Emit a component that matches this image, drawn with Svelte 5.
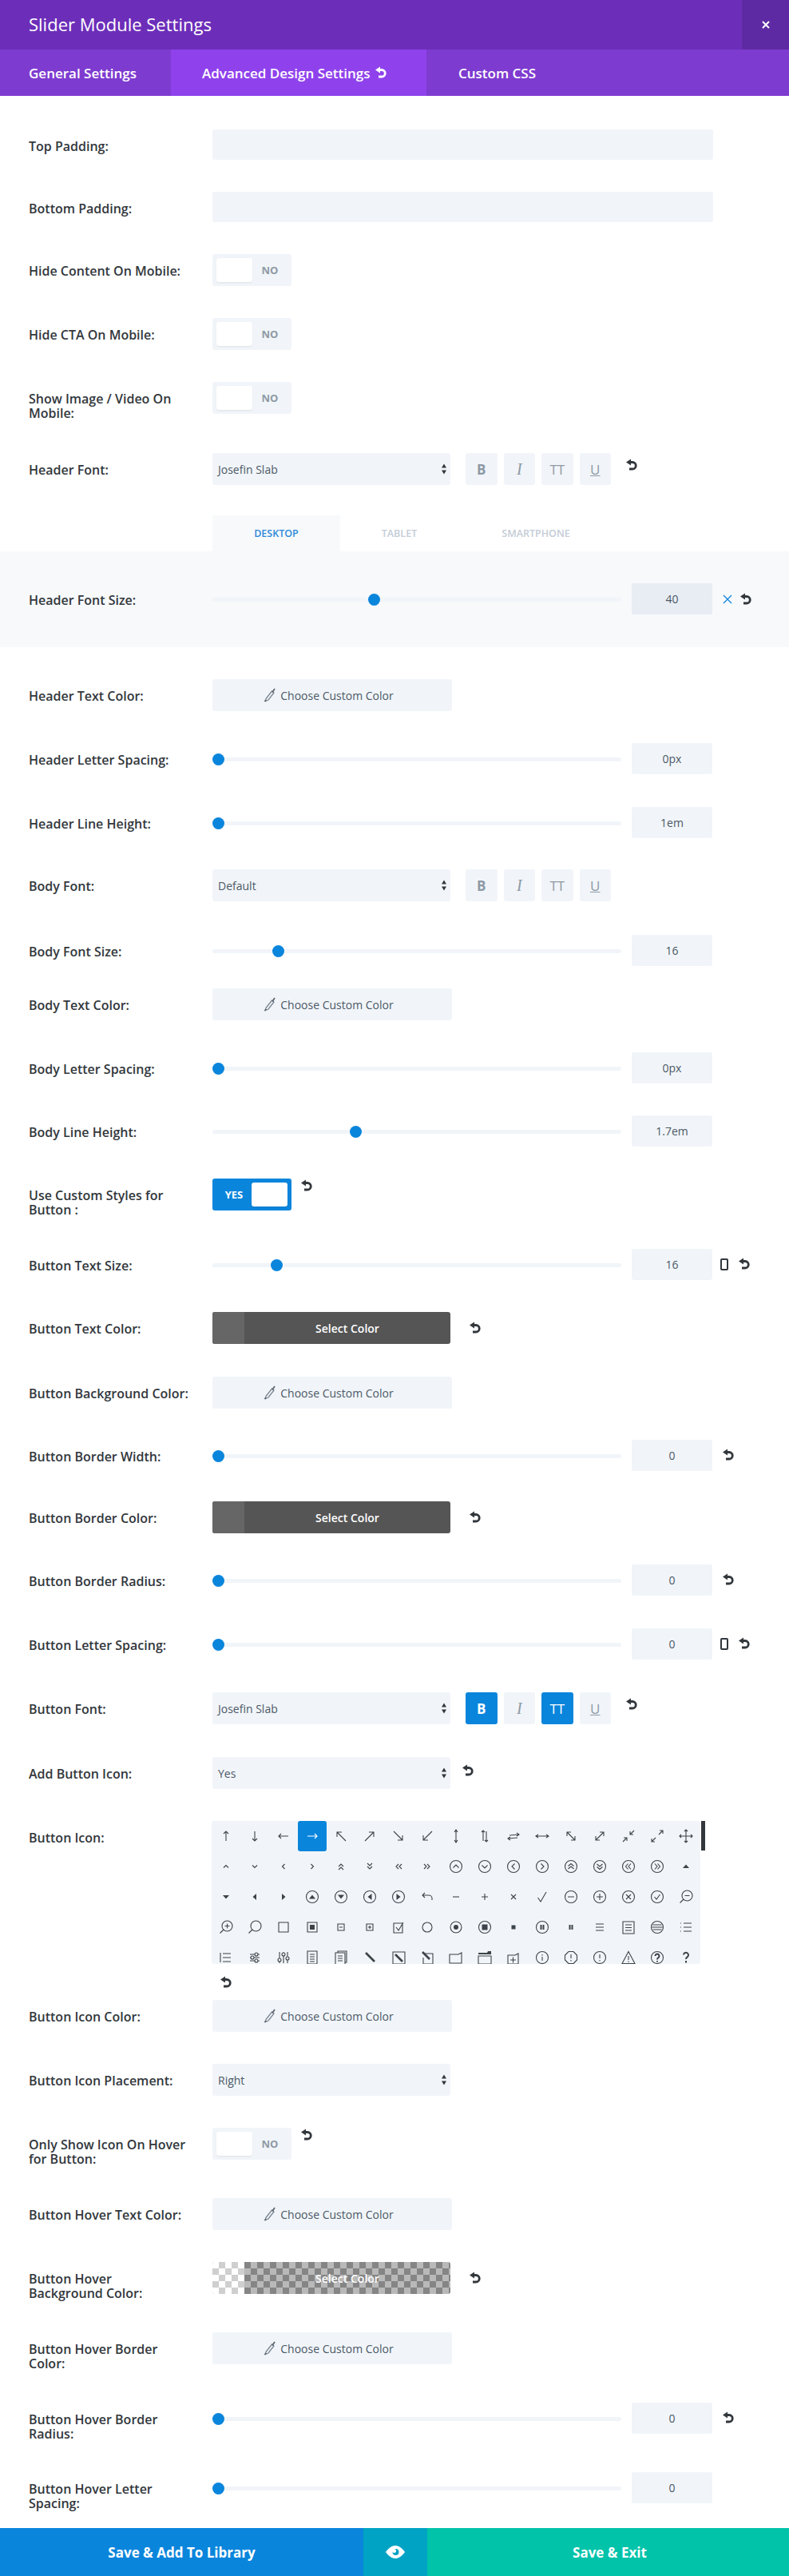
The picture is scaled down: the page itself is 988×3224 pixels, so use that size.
<script>
	// rows: gap = space above the 40px control
	const rows = [
		{ gap: 38, label: 'Bottom Padding:', type: 'text' },
		{ gap: 38, label: 'Hide Content On Mobile:', type: 'toggle' },
		{ gap: 40, label: 'Hide CTA On Mobile:', type: 'toggle' },
		{ gap: 40, label: 'Show Image / Video On Mobile:', type: 'toggle' },
		{ gap: 49, label: 'Header Font:', type: 'font', value: 'Josefin Slab', reset: true }
	];
	const rows2 = [
		{ gap: 40, label: 'Header Text Color:', type: 'color' },
		{ gap: 40, label: 'Header Letter Spacing:', type: 'slider', pos: 0, value: '0px' },
		{ gap: 40, label: 'Header Line Height:', type: 'slider', pos: 0, value: '1em' },
		{ gap: 38, label: 'Body Font:', type: 'font', value: 'Default' },
		{ gap: 42, label: 'Body Font Size:', type: 'slider', pos: 75, value: '16' },
		{ gap: 27, label: 'Body Text Color:', type: 'color' },
		{ gap: 40, label: 'Body Letter Spacing:', type: 'slider', pos: 0, value: '0px' },
		{ gap: 39, label: 'Body Line Height:', type: 'slider', pos: 172, value: '1.7em' },
		{ gap: 39, label: 'Use Custom Styles for Button :', type: 'toggle', on: true, reset: true },
		{ gap: 48, label: 'Button Text Size:', type: 'slider', pos: 73, value: '16', phone: true, reset: true },
		{ gap: 39, label: 'Button Text Color:', type: 'select-color', reset: true },
		{ gap: 41, label: 'Button Background Color:', type: 'color' },
		{ gap: 39, label: 'Button Border Width:', type: 'slider', pos: 0, value: '0', reset: true },
		{ gap: 37, label: 'Button Border Color:', type: 'select-color', reset: true },
		{ gap: 39, label: 'Button Border Radius:', type: 'slider', pos: 0, value: '0', reset: true },
		{ gap: 40, label: 'Button Letter Spacing:', type: 'slider', pos: 0, value: '0', phone: true, reset: true },
		{ gap: 40, label: 'Button Font:', type: 'font', value: 'Josefin Slab', active: ['B', 'TT'], reset: true },
		{ gap: 41, label: 'Add Button Icon:', type: 'select', value: 'Yes', reset: true }
	];
	const rows3 = [
		{ gap: 14, label: 'Button Icon Color:', type: 'color' },
		{ gap: 40, label: 'Button Icon Placement:', type: 'select', value: 'Right' },
		{ gap: 40, label: 'Only Show Icon On Hover for Button:', type: 'toggle', reset: true },
		{ gap: 48, label: 'Button Hover Text Color:', type: 'color' },
		{ gap: 40, label: 'Button Hover Background Color:', type: 'select-color', clear: true, reset: true },
		{ gap: 48, label: 'Button Hover Border Color:', type: 'color' },
		{ gap: 48, label: 'Button Hover Border Radius:', type: 'slider', pos: 0, value: '0', reset: true },
		{ gap: 47, label: 'Button Hover Letter Spacing:', type: 'slider', pos: 0, value: '0' }
	];

	const C = 'M19.5 12a7.5 7.5 0 1 1-15 0 7.5 7.5 0 1 1 15 0';
	const ring = (x, y, r) => `M${x + r} ${y}a${r} ${r} 0 1 1-${r * 2} 0 ${r} ${r} 0 1 1 ${r * 2} 0`;
	const SQ = 'M9.5 9.5h5v5h-5z';
	// s = thin stroke, f = filled, t = thick stroke
	const icons = [
		{ s: 'M12 18V6M9 9l3-3 3 3' },
		{ s: 'M12 6v12M9 15l3 3 3-3' },
		{ s: 'M18 12H6M9 9l-3 3 3 3' },
		{ s: 'M6 12h12M15 9l3 3-3 3' },
		{ s: 'M18 18L7 7M7 13V7h6' },
		{ s: 'M6 18L17 7M11 7h6v6' },
		{ s: 'M6 6l11 11M17 11v6h-6' },
		{ s: 'M18 6L7 17M13 17H7v-6' },
		{ s: 'M12 4v16M10 7l2-3 2 3M10 17l2 3 2-3' },
		{ s: 'M10 18V5M8 7l2-2 2 2M14 6v13M12 17l2 2 2-2' },
		{ s: 'M7 11l11-1M16 8l3 2-3 2M17 14L6 15M8 13l-3 2 3 2' },
		{ s: 'M4 12h16M7 10l-3 2 3 2M17 10l3 2-3 2' },
		{ s: 'M7 7l10 10M7 12V7h5M17 12v5h-5' },
		{ s: 'M17 7L7 17M12 7h5v5M7 12v5h5' },
		{ s: 'M19 5l-5 5M14 6v4h4M5 19l5-5M6 14h4v4' },
		{ s: 'M14 10l5-5M15 5h4v4M10 14l-5 5M5 15v4h4' },
		{ s: 'M12 4v16M4 12h16M10 6l2-2 2 2M10 18l2 2 2-2M6 10l-2 2 2 2M18 10l2 2-2 2' },

		{ s: 'M9 13.5l3-3 3 3' },
		{ s: 'M9 10.5l3 3 3-3' },
		{ s: 'M13.5 9l-3 3 3 3' },
		{ s: 'M10.5 9l3 3-3 3' },
		{ s: 'M9 12l3-3 3 3M9 16l3-3 3 3' },
		{ s: 'M9 8l3 3 3-3M9 12l3 3 3-3' },
		{ s: 'M12 9l-3 3 3 3M16 9l-3 3 3 3' },
		{ s: 'M8 9l3 3-3 3M12 9l3 3-3 3' },
		{ s: C + 'M8.5 13.5l3.5-3.5 3.5 3.5' },
		{ s: C + 'M8.5 10.5l3.5 3.5 3.5-3.5' },
		{ s: C + 'M13.5 8.5L10 12l3.5 3.5' },
		{ s: C + 'M10.5 8.5L14 12l-3.5 3.5' },
		{ s: C + 'M8.5 11.5l3.5-3 3.5 3M8.5 15l3.5-3 3.5 3' },
		{ s: C + 'M8.5 9l3.5 3 3.5-3M8.5 12.5l3.5 3 3.5-3' },
		{ s: C + 'M11.5 8.5l-3 3.5 3 3.5M15 8.5L12 12l3 3.5' },
		{ s: C + 'M9 8.5l3 3.5-3 3.5M12.5 8.5l3 3.5-3 3.5' },
		{ f: 'M8 14l4-4.5 4 4.5z' },

		{ f: 'M8 10l4 4.5 4-4.5z' },
		{ f: 'M14 8l-4.5 4 4.5 4z' },
		{ f: 'M10 8l4.5 4-4.5 4z' },
		{ s: C, f: 'M8 14.5l4-5 4 5z' },
		{ s: C, f: 'M8 9.5l4 5 4-5z' },
		{ s: C, f: 'M14.5 8l-5 4 5 4z' },
		{ s: C, f: 'M9.5 8l5 4-5 4z' },
		{ s: 'M6 10h8a4 4 0 0 1 4 4v2M9 7l-3 3 3 3' },
		{ s: 'M8 12h8' },
		{ s: 'M8 12h8M12 8v8' },
		{ s: 'M9 9l6 6M15 9l-6 6' },
		{ s: 'M6.5 13l3.5 5L17 6' },
		{ s: C + 'M8 12h8' },
		{ s: C + 'M8 12h8M12 8v8' },
		{ s: C + 'M9 9l6 6M15 9l-6 6' },
		{ s: C + 'M8.5 12l2.5 3 4.5-6' },
		{ s: ring(13.5, 10.5, 6.5) + 'M9 15l-4.5 4.5M10.5 10.5h6' },

		{ s: ring(13.5, 10.5, 6.5) + 'M9 15l-4.5 4.5M10.5 10.5h6M13.5 7.5v6' },
		{ s: ring(13.5, 10.5, 6.5) + 'M9 15l-4.5 4.5' },
		{ s: 'M6 6h12v12H6z' },
		{ s: 'M6 6h12v12H6z', f: 'M9 9h6v6H9z' },
		{ s: 'M8 8h8v8H8zM10 12h4' },
		{ s: 'M8 8h8v8H8zM10 12h4M12 10v4' },
		{ s: 'M6 7h11v12H6zM9 12l3 4 6-10' },
		{ s: ring(12, 12, 6) },
		{ s: ring(12, 12, 7), f: ring(12, 12, 3) },
		{ s: C, f: 'M8.5 8.5h7v7h-7z' },
		{ f: SQ },
		{ s: C, f: 'M9.5 9h2v6h-2zM12.5 9h2v6h-2z' },
		{ f: 'M9.5 9h2v6h-2zM12.5 9h2v6h-2z' },
		{ s: 'M7 8h10M7 12h10M7 16h10' },
		{ s: 'M5 5h14v15H5zM8 9h8M8 12.5h8M8 16h8' },
		{ s: C + 'M6.5 9h11M5.5 12h13M6.5 15h11' },
		{ s: 'M9 7h10M9 12h10M9 17h10M5 7h1M5 12h1M5 17h1' },

		{ s: 'M8 7h10M8 12h10M8 17h10M5 6v12' },
		{ s: 'M6 8h6M16 8h2M6 12h1M11 12h7M6 16h6M16 16h2' + ring(14, 8, 2) + ring(9, 12, 2) + ring(14, 16, 2) },
		{ s: 'M7 5v8M7 17v2M12 5v1M12 10v9M17 5v6M17 15v4' + ring(7, 15, 2) + ring(12, 8, 2) + ring(17, 13, 2) },
		{ s: 'M6 4h12v16H6zM9 8h6M9 11h6M9 14h6M9 17h6' },
		{ s: 'M5 6h12v15H5zM8 6V4h11v14h-2M8 10h6M8 13h6M8 16h6' },
		{ t: 'M7 6l11 11' },
		{ s: 'M5 5h15v15H5z', t: 'M8 8l9 9' },
		{ s: 'M9 7h10v13H7v-8', t: 'M6 5l9 9' },
		{ s: 'M4 8h11l4-2v13H4z' },
		{ s: 'M4 10h16v10H4z', f: 'M4 6h11l1-2h4v4H4z' },
		{ s: 'M5 9h9l4-2v13H5zM8 15h7M11.5 11.5v7' },
		{ s: C + 'M12 11v5M12 8v1.5' },
		{ s: 'M9 4.5h6L19.5 9v6L15 19.5H9L4.5 15V9zM12 8v5M12 15v1.5' },
		{ s: C + 'M12 8v5M12 15v1.5' },
		{ s: 'M12 4.5L20 19.5H4zM12 10v5M12 16.5v1.5' },
		{ s: C, t2: 'M9.5 10a2.5 2.5 0 1 1 4 2c-1 .8-1.5 1-1.5 2.5M12 16v1.5' },
		{ t2: 'M9 8.5a3 3 0 1 1 5 2.5c-1 1-2 1.2-2 3M12 16v2.5' }
	];
</script>

{#snippet resetIcon(kind)}
	<svg class="reset {kind}" viewBox="0 0 16 16" width="16" height="16">
		<path d="M5 4.5h4a4.2 4.2 0 0 1 0 8.5H5" fill="none" stroke="currentColor" stroke-width="2.8" />
		<path d="M7 .5L1 4.5l6 4z" fill="currentColor" />
	</svg>
{/snippet}

{#snippet dropper()}
	<svg class="dropper" viewBox="0 0 16 18" width="16" height="18">
		<path d="M3 13.5L10.5 4l2.5 2-7 9-3.5 1.5z" fill="none" stroke="#7b8590" stroke-width="1.3" />
		<path d="M1.5 17L3 15M11 5.5L14 1" stroke="#5c6670" stroke-width="1.8" fill="none" />
	</svg>
{/snippet}

{#snippet arrows()}
	<svg class="arrows" viewBox="0 0 8 16" width="8" height="16">
		<path d="M1 6.5L4 1.5l3 5zM1 9.5l3 5 3-5z" fill="#32373c" />
	</svg>
{/snippet}

{#snippet fontButtons(active)}
	<div class="styles">
		<span class="fb bold" class:active={active?.includes('B')}>B</span>
		<span class="fb ital">I</span>
		<span class="fb tt" class:active={active?.includes('TT')}>TT</span>
		<span class="fb under">U</span>
	</div>
{/snippet}

{#snippet slider(pos, value, extra)}
	<div class="track"><span class="thumb" style="left: {pos}px"></span></div>
	<div class="num" class:band-num={extra}>{value}</div>
{/snippet}

{#snippet row(r)}
	<div class="row" style="margin-top: {r.gap}px">
		<div class="label">{r.label}</div>
		<div class="control">
			{#if r.type === 'text'}
				<div class="input"></div>
			{:else if r.type === 'toggle'}
				<div class="toggle" class:on={r.on}>
					{#if r.on}<span class="state">YES</span><span class="knob"></span>
					{:else}<span class="knob"></span><span class="state">NO</span>{/if}
				</div>
				{#if r.reset}{@render resetIcon('after-toggle')}{/if}
			{:else if r.type === 'font'}
				<div class="select">{r.value}{@render arrows()}</div>
				{@render fontButtons(r.active)}
				{#if r.reset}{@render resetIcon('after-font')}{/if}
			{:else if r.type === 'select'}
				<div class="select">{r.value}{@render arrows()}</div>
				{#if r.reset}{@render resetIcon('after-select')}{/if}
			{:else if r.type === 'color'}
				<div class="color">{@render dropper()}Choose Custom Color</div>
			{:else if r.type === 'select-color'}
				<div class="pick" class:clear={r.clear}><span class="swatch"></span><span class="pick-text">Select Color</span></div>
				{#if r.reset}{@render resetIcon('after-pick')}{/if}
			{:else if r.type === 'slider'}
				{@render slider(r.pos, r.value, false)}
				{#if r.phone}
					<span class="phone"></span>
					{@render resetIcon('after-phone')}
				{:else if r.reset}
					{@render resetIcon('after-num')}
				{/if}
			{/if}
		</div>
	</div>
{/snippet}

<div class="modal">
	<header class="head">
		<h1>Slider Module Settings</h1>
		<span class="close">
			<svg viewBox="0 0 12 12" width="12" height="12"><path d="M2 2l8 8M10 2l-8 8" stroke="#fff" stroke-width="2" /></svg>
		</span>
	</header>
	<nav class="tabs">
		<span class="tab first">General Settings</span>
		<span class="tab current">Advanced Design Settings {@render resetIcon('in-tab')}</span>
		<span class="tab last">Custom CSS</span>
	</nav>

	<main class="body">
		<div class="row first-row">
			<div class="label">Top Padding:</div>
			<div class="control"><div class="input short"></div></div>
		</div>
		{#each rows as r}
			{@render row(r)}
		{/each}

		<div class="device">
			<div class="device-tabs">
				<span class="dt desktop">DESKTOP</span>
				<span class="dt tablet">TABLET</span>
				<span class="dt smartphone">SMARTPHONE</span>
			</div>
			<div class="band">
				<div class="row">
					<div class="label">Header Font Size:</div>
					<div class="control">
						{@render slider(195, '40', true)}
						<svg class="cross" viewBox="0 0 12 12" width="12" height="12"><path d="M1 1l10 10M11 1L1 11" stroke="#0a85dc" stroke-width="1.3" /></svg>
						{@render resetIcon('after-cross')}
					</div>
				</div>
			</div>
		</div>

		{#each rows2 as r}
			{@render row(r)}
		{/each}

		<div class="row icons-row">
			<div class="label">Button Icon:</div>
			<div class="icons-wrap">
				<div class="icons-box">
					<div class="icons">
						{#each icons as ic, i}
							<span class="cell" class:picked={i === 3}>
								<svg viewBox="0 0 24 24" width="24" height="24">
									{#if ic.s}<path class="s" d={ic.s} />{/if}
									{#if ic.f}<path class="f" d={ic.f} />{/if}
									{#if ic.t}<path class="t" d={ic.t} />{/if}
									{#if ic.t2}<path class="t2" d={ic.t2} />{/if}
								</svg>
							</span>
						{/each}
					</div>
					<span class="scrollbar"></span>
				</div>
				{@render resetIcon('after-icons')}
			</div>
		</div>

		{#each rows3 as r}
			{@render row(r)}
		{/each}
	</main>

	<footer class="foot">
		<span class="btn library">Save &amp; Add To Library</span>
		<span class="btn preview">
			<svg viewBox="0 0 24 16" width="24" height="16">
				<path d="M0 8C4 2.5 8 0 12 0s8 2.5 12 8c-4 5.500-8 8-12 8S4 13.5 0 8z" fill="#fff" />
				<circle cx="12.5" cy="8" r="4" fill="#00a3c4" />
				<circle cx="10.5" cy="6.5" r="2.5" fill="#fff" />
			</svg>
		</span>
		<span class="btn exit">Save &amp; Exit</span>
	</footer>
</div>

<style>
	:global(body) {
		margin: 0;
		background: #fff;
	}

	.modal {
		width: 988px;
		height: 3224px;
		overflow: hidden;
		display: flex;
		flex-direction: column;
		font-family: 'Open Sans', sans-serif;
		color: #32373c;
	}

	.head {
		height: 62px;
		flex: none;
		display: flex;
		align-items: center;
		justify-content: space-between;
		background: #6c2eb9;
		color: #fff;
	}

	h1 {
		margin: 0 0 2px 36px;
		font-size: 22px;
		font-weight: 400;
	}

	.close {
		width: 59px;
		height: 62px;
		display: flex;
		align-items: center;
		justify-content: center;
		background: #5e2aa3;
	}

	.tabs {
		height: 58px;
		flex: none;
		display: flex;
		background: #7e3bd0;
		color: #fff;
		font-size: 17px;
		font-weight: 600;
	}

	.tab {
		display: flex;
		align-items: center;
		padding: 0 39px 0 36px;
	}

	.tab.first {
		width: 214px;
		box-sizing: border-box;
	}

	.tab.current {
		width: 320px;
		box-sizing: border-box;
		padding-left: 39px;
		background: #8f42ec;
		white-space: pre;
	}

	.tab.last {
		padding-left: 40px;
	}

	.body {
		flex: 1;
	}

	.row {
		display: flex;
		height: 40px;
		padding-left: 36px;
	}

	.first-row {
		margin-top: 42px;
	}

	.label {
		flex: none;
		width: 200px;
		margin-right: 30px;
		padding-top: 12px;
		font-size: 16px;
		font-weight: 600;
		line-height: 18px;
	}

	.control {
		display: flex;
		align-items: flex-start;
		font-size: 14px;
		color: #4c5866;
	}

	.input {
		width: 627px;
		height: 38px;
		background: #f1f5f9;
		border-radius: 3px;
	}

	.toggle {
		width: 99px;
		height: 40px;
		display: flex;
		align-items: center;
		box-sizing: border-box;
		padding: 0 5px;
		background: #f1f5f9;
		border-radius: 3px;
	}

	.knob {
		width: 45px;
		height: 30px;
		background: #fff;
		border-radius: 3px;
		box-shadow: 0 1px 2px rgba(0, 0, 0, 0.08);
	}

	.state {
		flex: 1;
		text-align: center;
		font-size: 13px;
		font-weight: 700;
		color: #8e99a5;
	}

	.toggle.on {
		background: #0a85dc;
	}

	.toggle.on .state {
		color: #fff;
	}

	.select {
		width: 298px;
		height: 40px;
		display: flex;
		align-items: center;
		justify-content: space-between;
		box-sizing: border-box;
		padding: 0 4px 0 7px;
		background: #f1f5f9;
		border-radius: 3px;
	}

	.styles {
		display: flex;
		gap: 8px;
		margin-left: 19px;
	}

	.fb {
		width: 39.5px;
		height: 40px;
		display: flex;
		align-items: center;
		justify-content: center;
		background: #f1f5f9;
		border-radius: 3px;
		color: #8e99a5;
		font-size: 17px;
		font-weight: 600;
	}

	.fb.bold {
		font-weight: 700;
	}

	.fb.ital {
		font-family: 'Liberation Serif', serif;
		font-style: italic;
		font-size: 20px;
		font-weight: 400;
	}

	.fb.tt {
		font-weight: 400;
	}

	.fb.under {
		font-weight: 400;
		text-decoration: underline;
	}

	.fb.active {
		background: #0a85dc;
		color: #fff;
	}

	.color {
		width: 300px;
		height: 40px;
		display: flex;
		align-items: center;
		justify-content: center;
		gap: 5px;
		padding-right: 9px;
		box-sizing: border-box;
		background: #f1f5f9;
		border-radius: 3px;
		white-space: nowrap;
	}

	.pick {
		position: relative;
		width: 298px;
		height: 40px;
		display: flex;
		background: #555;
		border-radius: 3px;
		overflow: hidden;
		color: #fff;
		font-weight: 600;
	}

	.swatch {
		width: 40px;
		background: #666;
	}

	.pick-text {
		flex: 1;
		display: flex;
		align-items: center;
		justify-content: center;
	}

	.pick.clear {
		background: repeating-conic-gradient(#858585 0 25%, #b9b9b9 0 50%) 0 0 / 16px 16px;
	}

	.pick.clear .swatch {
		background: repeating-conic-gradient(#cfcfcf 0 25%, #fff 0 50%) 0 0 / 16px 16px;
	}

	.track {
		position: relative;
		width: 512px;
		height: 5px;
		margin: 18px 13px 0 0;
		background: #f1f5f9;
		border-radius: 3px;
	}

	.thumb {
		position: absolute;
		top: -5px;
		width: 15px;
		height: 15px;
		background: #0a85dc;
		border-radius: 50%;
	}

	.num {
		width: 101px;
		height: 39px;
		display: flex;
		align-items: center;
		justify-content: center;
		background: #f1f5f9;
		border-radius: 3px;
	}

	.num.band-num {
		background: #e8edf3;
	}

	.reset {
		flex: none;
		color: #32373c;
	}

	.reset.in-tab {
		color: #fff;
		margin: 0 0 0 1px;
	}

	.reset.after-toggle {
		margin: 1px 0 0 11px;
	}

	.reset.after-font {
		margin: 7px 0 0 18px;
	}

	.reset.after-select {
		margin: 9px 0 0 14px;
	}

	.reset.after-pick {
		margin: 12px 0 0 23px;
	}

	.reset.after-num {
		margin: 11px 0 0 12px;
	}

	.reset.after-phone {
		margin: 11px 0 0 12px;
	}

	.reset.after-cross {
		margin: 12px 0 0 9px;
	}

	.reset.after-icons {
		display: block;
		margin: 15px 0 0 10px;
	}

	.cross {
		margin: 14px 0 0 13px;
	}

	.phone {
		box-sizing: border-box;
		width: 10px;
		height: 15px;
		margin: 12px 0 0 10px;
		border: 2px solid #32373c;
		border-radius: 2px;
	}

	.device {
		margin-top: 38px;
	}

	.device-tabs {
		height: 45px;
		display: flex;
		margin-left: 266px;
		font-size: 12.5px;
		font-weight: 600;
		color: #c4ccd6;
	}

	.dt {
		display: flex;
		align-items: center;
		justify-content: center;
	}

	.desktop {
		width: 160px;
		background: #f7f9fb;
		color: #2e8ad8;
	}

	.tablet {
		width: 148px;
	}

	.smartphone {
		width: 194px;
	}

	.band {
		height: 80px;
		padding-top: 40px;
		background: #f7f9fb;
	}

	.icons-row {
		height: auto;
		margin-top: 40px;
	}

	.icons-wrap {
		margin-left: -1px;
	}

	.icons-box {
		display: flex;
		gap: 1px;
		align-items: flex-start;
	}

	.icons {
		width: 612px;
		height: 179px;
		overflow: hidden;
		display: grid;
		grid-template-columns: repeat(17, 36px);
		grid-auto-rows: 38px;
		background: #f1f5f9;
		border-radius: 3px;
	}

	.cell {
		display: flex;
		align-items: center;
		justify-content: center;
		border-radius: 3px;
		color: #3c434a;
	}

	.cell.picked {
		background: #0a85dc;
		color: #fff;
	}

	.cell path {
		fill: none;
		stroke: currentColor;
		stroke-width: 1.1;
	}

	.cell path.f {
		fill: currentColor;
		stroke: none;
	}

	.cell path.t {
		stroke-width: 2.6;
	}

	.cell path.t2 {
		stroke-width: 2;
	}

	.scrollbar {
		width: 5px;
		height: 37px;
		background: #32373c;
	}

	.foot {
		height: 60px;
		flex: none;
		display: flex;
		color: #fff;
		font-size: 17px;
		font-weight: 700;
	}

	.btn {
		display: flex;
		align-items: center;
		justify-content: center;
	}

	.library {
		width: 455px;
		background: #0a85dc;
	}

	.preview {
		width: 80px;
		background: #00a3c4;
	}

	.exit {
		flex: 1;
		padding-left: 4px;
		background: #00c3aa;
	}
</style>
